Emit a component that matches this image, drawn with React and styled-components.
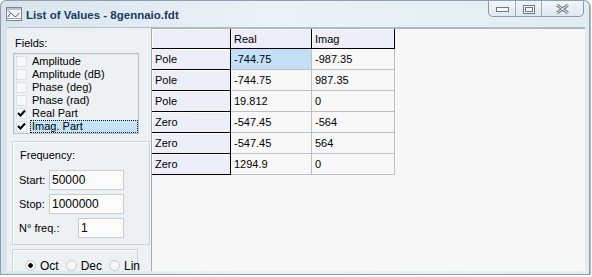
import React from 'react'
import styled, { createGlobalStyle } from 'styled-components'

const GlobalStyle = createGlobalStyle`
  html, body {
    margin: 0;
    padding: 0;
    background: #ffffff;
  }
  body {
    font-family: "Liberation Sans", Arial, sans-serif;
    font-size: 11px;
    color: #000000;
  }
`

const fields = [
    { label: 'Amplitude', checked: false },
    { label: 'Amplitude (dB)', checked: false },
    { label: 'Phase (deg)', checked: false },
    { label: 'Phase (rad)', checked: false },
    { label: 'Real Part', checked: true },
    { label: 'Imag. Part', checked: true, selected: true },
]

const rows = [
    { kind: 'Pole', re: '-744.75', im: '-987.35', selected: true },
    { kind: 'Pole', re: '-744.75', im: '987.35' },
    { kind: 'Pole', re: '19.812', im: '0' },
    { kind: 'Zero', re: '-547.45', im: '-564' },
    { kind: 'Zero', re: '-547.45', im: '564' },
    { kind: 'Zero', re: '1294.9', im: '0' },
]

const WindowIcon = () => (
    <svg width="16" height="16" viewBox="0 0 16 16">
        <rect x="0.5" y="1.5" width="15" height="13" fill="#f4f6fa" stroke="#7c8794" />
        <rect x="1" y="2" width="14" height="2" fill="#b4c4dc" />
        <path d="M2 4.5 L5 7.5" stroke="#d83838" fill="none" />
        <path d="M2 11 Q4.5 5 7 9 T13 7" stroke="#3858c0" fill="none" />
        <line x1="1" y1="12.5" x2="15" y2="12.5" stroke="#9aa4b0" />
    </svg>
)

const CheckMark = () => (
    <svg width="9" height="9" viewBox="0 0 9 9">
        <path d="M1 4 L3.5 6.5 L8 1.5" stroke="#000" strokeWidth="2" fill="none" />
    </svg>
)

const App = () => {
    return (
        <>
            <GlobalStyle />
            <Window>
                <TitleBar>
                    <WindowIcon />
                    <Title>List of Values - 8gennaio.fdt</Title>
                    <Caption>
                        <CapButton width={27}>
                            <svg width="13" height="5" viewBox="0 0 13 5">
                                <rect x="0.5" y="0.5" width="12" height="4" fill="#fafafa" stroke="#6e7884" />
                            </svg>
                        </CapButton>
                        <CapButton width={26}>
                            <svg width="12" height="9" viewBox="0 0 12 9">
                                <rect x="0.5" y="0.5" width="11" height="8" fill="#fafafa" stroke="#6e7884" />
                                <rect x="2.5" y="2.5" width="7" height="4" fill="#fafafa" stroke="#6e7884" />
                            </svg>
                        </CapButton>
                        <CapButton width={41} last>
                            <svg width="15" height="10" viewBox="0 0 15 10">
                                <path d="M2 1 L13 9 M13 1 L2 9" stroke="#6e7884" strokeWidth="3" fill="none" />
                                <path d="M2 1 L13 9 M13 1 L2 9" stroke="#f4f6f8" strokeWidth="1" fill="none" />
                            </svg>
                        </CapButton>
                    </Caption>
                </TitleBar>
                <Client>
                    <LeftPanel>
                        <Label margin="9px 0 0 8px">Fields:</Label>
                        <ListBox>
                            {fields.map((f, i) => (
                                <ListItem key={i}>
                                    <CheckBox>{f.checked && <CheckMark />}</CheckBox>
                                    <ItemText selected={f.selected}>{f.label}</ItemText>
                                </ListItem>
                            ))}
                        </ListBox>
                        <FreqGroup>
                            <Label margin="7px 0 0 7px">Frequency:</Label>
                            <FieldRow margin="8px 0 0 0">
                                <span>Start:</span>
                                <Input width={75}>50000</Input>
                            </FieldRow>
                            <FieldRow margin="4px 0 0 0">
                                <span>Stop:</span>
                                <Input width={75}>1000000</Input>
                            </FieldRow>
                            <FieldRow margin="4px 0 0 0">
                                <span>N° freq.:</span>
                                <Input width={46}>1</Input>
                            </FieldRow>
                        </FreqGroup>
                        <RadioGroup>
                            <RadioItem>
                                <Radio checked />
                                <span>Oct</span>
                            </RadioItem>
                            <RadioItem>
                                <Radio />
                                <span>Dec</span>
                            </RadioItem>
                            <RadioItem>
                                <Radio />
                                <span>Lin</span>
                            </RadioItem>
                        </RadioGroup>
                    </LeftPanel>
                    <TableArea>
                        <Grid>
                            <HeadCell />
                            <HeadCell>Real</HeadCell>
                            <HeadCell>Imag</HeadCell>
                            {rows.map((r, i) => (
                                <React.Fragment key={i}>
                                    <RowHead>{r.kind}</RowHead>
                                    <Cell selected={r.selected}>{r.re}</Cell>
                                    <Cell>{r.im}</Cell>
                                </React.Fragment>
                            ))}
                        </Grid>
                    </TableArea>
                </Client>
            </Window>
        </>
    )
}

const Window = styled.div`
    width: 590px;
    height: 275px;
    box-sizing: border-box;
    display: flex;
    flex-direction: column;
    border: 1px solid #8f9fae;
    border-bottom-color: #7eaaa4;
    border-radius: 6px 6px 0 0;
    background: linear-gradient(to right, #d8e4ed, #ebf2f6 45%, #e2edf1);
    box-shadow: 1px 1px 1px rgba(0, 0, 0, 0.3);
    padding: 0 4px 3px 6px;
`

const TitleBar = styled.div`
    height: 26px;
    flex: none;
    display: flex;
    align-items: flex-start;
    margin: 0 -4px 0 -6px;
    padding: 0 5px 0 5px;
    svg {
        margin-top: 5px;
    }
`

const Title = styled.span`
    margin: 7px 0 0 4px;
    font-size: 11.5px;
    font-weight: bold;
    line-height: 15px;
    color: #1b3a64;
`

const Caption = styled.div`
    display: flex;
    margin-left: auto;
    height: 16px;
    box-sizing: border-box;
    border: 1px solid #8e9bab;
    border-top: none;
    border-radius: 0 0 5px 5px;
    background: linear-gradient(#f2f6f9, #dfe7ee);
    overflow: hidden;
`

const CapButton = styled.div`
    width: ${props => props.width}px;
    box-sizing: border-box;
    display: flex;
    align-items: center;
    justify-content: center;
    border-right: ${props => (props.last ? 'none' : '1px solid #a4afbc')};
    svg {
        margin-top: 1px;
    }
`

const Client = styled.div`
    flex: 1;
    display: flex;
    overflow: hidden;
    border-top: 1px solid #b4bece;
`

const LeftPanel = styled.div`
    width: 144px;
    flex: none;
    display: flex;
    flex-direction: column;
    background: #edf1f3;
    overflow: hidden;
`

const Label = styled.div`
    height: 13px;
    line-height: 13px;
    margin: ${props => props.margin};
`

const ListBox = styled.div`
    margin: 3px 0 0 6px;
    width: 126px;
    height: 81px;
    box-sizing: border-box;
    padding-top: 1px;
    border: 1px solid #b8c1c9;
    box-shadow: inset 1px 1px 0 #dde3e8;
    display: flex;
    flex-direction: column;
`

const ListItem = styled.div`
    height: 13px;
    display: flex;
    align-items: center;
    padding-left: 2px;
`

const CheckBox = styled.div`
    width: 11px;
    height: 11px;
    box-sizing: border-box;
    background: #f5f7f9;
    border: 1px solid #dde2e6;
    display: flex;
    align-items: center;
    justify-content: center;
`

const ItemText = styled.div`
    flex: 1;
    height: 13px;
    box-sizing: border-box;
    margin-left: 3px;
    padding-left: 1px;
    line-height: 11px;
    border: 1px dotted ${props => (props.selected ? '#1a1a1a' : 'transparent')};
    background: ${props => (props.selected ? '#c4e3f8' : 'transparent')};
`

const FreqGroup = styled.div`
    margin: 7px 0 0 5px;
    width: 138px;
    height: 104px;
    flex: none;
    box-sizing: border-box;
    border: 1px solid #cdd3d8;
    box-shadow: inset 1px 1px 0 #ffffff;
    display: flex;
    flex-direction: column;
`

const FieldRow = styled.div`
    height: 20px;
    display: flex;
    align-items: center;
    justify-content: space-between;
    padding: 0 25px 0 6px;
    margin: ${props => props.margin};
`

const Input = styled.div`
    width: ${props => props.width}px;
    height: 20px;
    box-sizing: border-box;
    border: 1px solid #c6ccd2;
    background: #fbfbfb;
    padding: 0 0 0 2px;
    line-height: 18px;
    font-size: 12px;
`

const RadioGroup = styled.div`
    margin: 4px 0 0 5px;
    width: 126px;
    flex: 1;
    box-sizing: border-box;
    border: 1px solid #cdd3d8;
    border-bottom: none;
    box-shadow: inset 1px 1px 0 #ffffff;
    display: flex;
    align-items: flex-start;
    gap: 7px;
    padding: 9px 0 0 12px;
`

const RadioItem = styled.label`
    display: flex;
    align-items: center;
    gap: 4px;
    height: 13px;
    font-size: 12px;
`

const Radio = styled.span`
    width: 11px;
    height: 11px;
    box-sizing: border-box;
    border-radius: 50%;
    border: 1px solid #c5cad0;
    background: radial-gradient(circle, ${props => (props.checked ? '#000 0 2px, #f6f6f6 2.5px' : '#f6f6f6 0')});
`

const TableArea = styled.div`
    flex: 1;
    background: #f7f7f7;
    border-left: 1px solid #a5adb6;
    border-top: 1px solid #aab2bb;
`

const Grid = styled.div`
    display: grid;
    grid-template-columns: 79px 81px 83px;
    grid-template-rows: 20px repeat(6, 21px);
`

const BaseCell = styled.div`
    box-sizing: border-box;
    display: flex;
    align-items: center;
    padding-left: 3px;
    white-space: nowrap;
`

const HeadCell = styled(BaseCell)`
    background: #eeeef9;
    border-right: 1px solid #000000;
    border-bottom: 1px solid #000000;
    box-shadow: inset 1px 1px 0 #ffffff;
`

const RowHead = styled(BaseCell)`
    background: #eeeef9;
    border-right: 1px solid #000000;
    border-bottom: 1px solid #000000;
    box-shadow: inset 1px 1px 0 #ffffff;
`

const Cell = styled(BaseCell)`
    background: ${props => (props.selected ? '#c2e1f7' : '#f8f8f8')};
    border-right: 1px solid #c0c0c0;
    border-bottom: 1px solid #c0c0c0;
`

export default App
